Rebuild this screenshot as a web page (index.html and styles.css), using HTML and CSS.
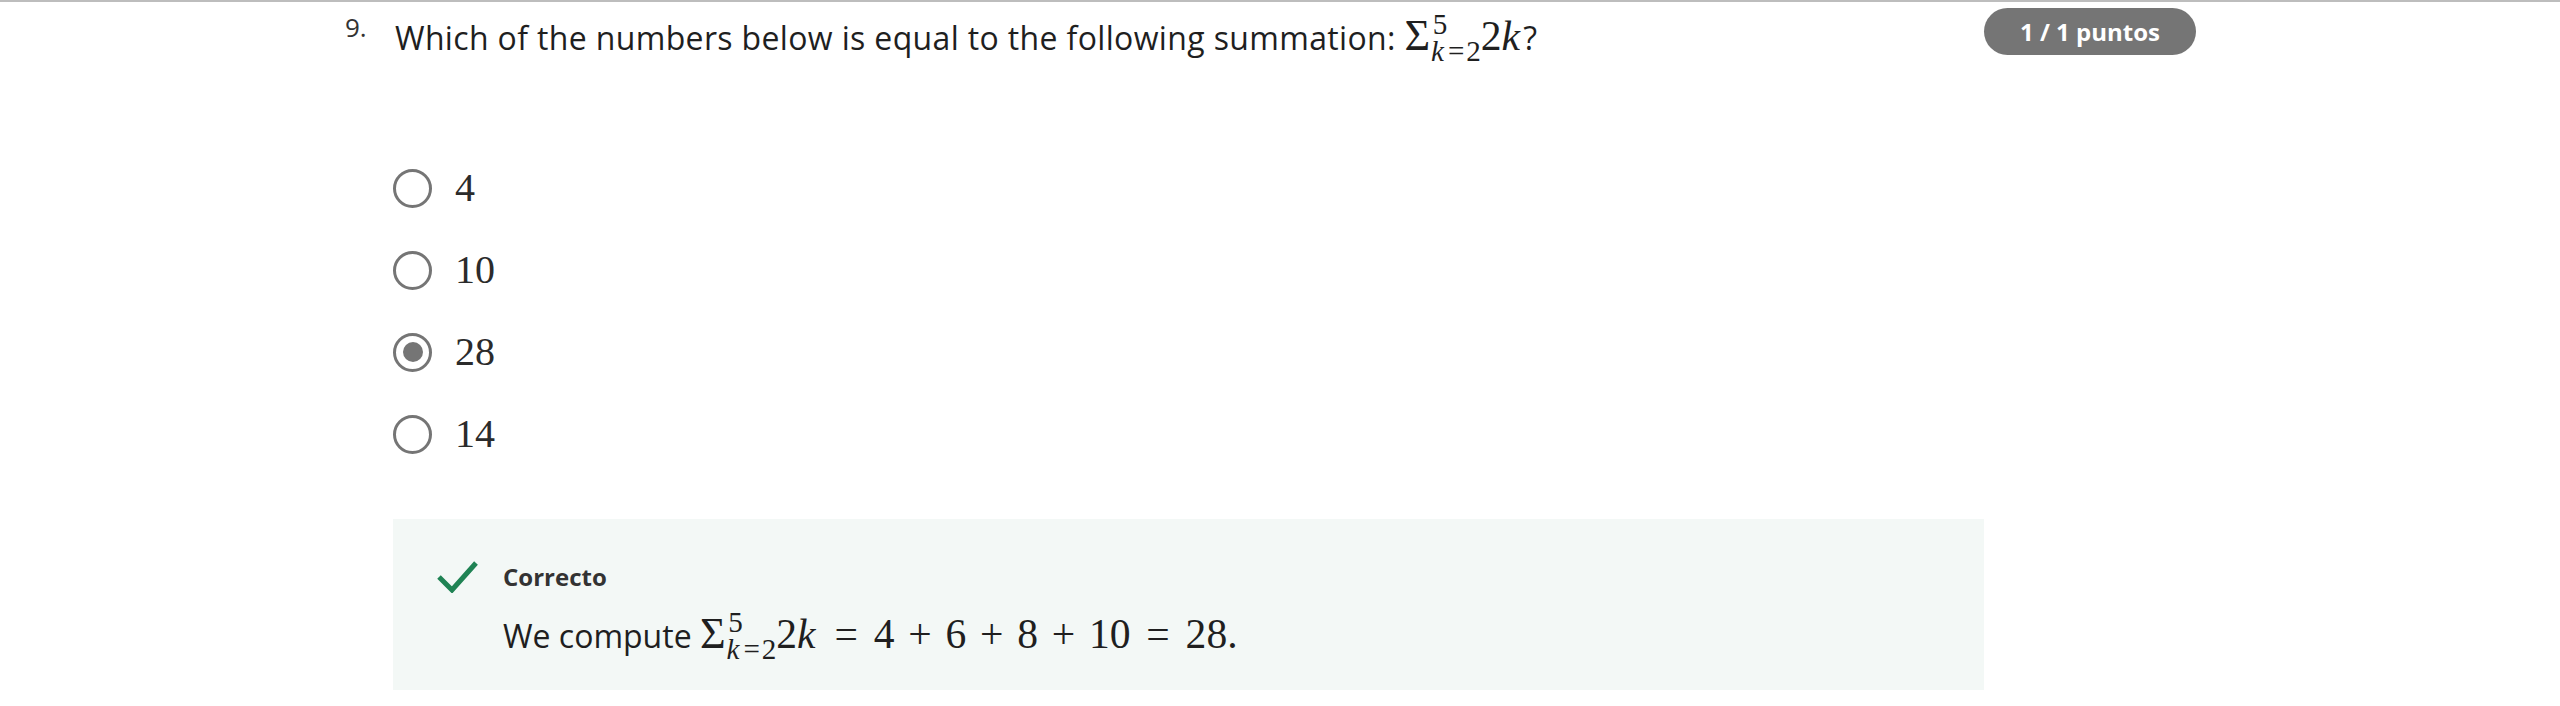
FILE: index.html
```html
<!DOCTYPE html>
<html lang="en">
<head>
<meta charset="utf-8">
<title>Question 9</title>
<link rel="stylesheet" href="styles.css">
</head>
<body>
<div class="topline"></div>
<div class="question">
  <div class="q-header">
    <span class="q-num">9.</span>
    <div class="q-text">Which of the numbers below is equal to the following summation: <span class="math"><span class="sigma">Σ</span><span class="limits"><span class="sup">5</span><span class="sub"><i class="mi">k</i><span class="srel">=</span>2</span></span><span>2</span><i class="mi">k</i></span>?</div>
    <div class="badge-col"><span class="badge">1 / 1 puntos</span></div>
  </div>
  <div class="body">
    <div class="options">
      <label class="option"><span class="radio"></span><span class="opt-text">4</span></label>
      <label class="option"><span class="radio"></span><span class="opt-text">10</span></label>
      <label class="option"><span class="radio checked"></span><span class="opt-text">28</span></label>
      <label class="option"><span class="radio"></span><span class="opt-text">14</span></label>
    </div>
    <div class="feedback">
      <svg class="check" width="41" height="33" viewBox="0 0 41 33"><path d="M2 17 L15 30 L39 3" fill="none" stroke="#1f8354" stroke-width="5"/></svg>
      <div class="fb-title">Correcto</div>
      <div class="fb-text">We compute <span class="math"><span class="sigma">Σ</span><span class="limits"><span class="sup">5</span><span class="sub"><i class="mi">k</i><span class="srel">=</span>2</span></span><span>2</span><i class="mi">k</i><span class="rel">=</span>4<span class="bin">+</span>6<span class="bin">+</span>8<span class="bin">+</span>10<span class="rel">=</span>28.</span></div>
    </div>
  </div>
</div>
</body>
</html>
```

FILE: styles.css
```css
html, body {
  margin: 0;
  padding: 0;
  background: #ffffff;
}
body {
  font-family: "Open Sans", "Liberation Sans", sans-serif;
  color: #1f1f1f;
  width: 2560px;
  height: 706px;
  overflow: hidden;
}
.topline {
  height: 2px;
  background: #bdbdbd;
}
.question {
  padding-left: 345px;
}
.q-header {
  display: grid;
  grid-template-columns: 50px 1589px 212px;
  align-items: start;
  height: 145px;
}
.q-num {
  font-size: 26px;
  line-height: 36px;
  padding-top: 7px;
  color: #333333;
}
.q-text {
  font-size: 32px;
  line-height: 48px;
  padding-top: 9px;
  letter-spacing: 0.35px;
}
.badge-col {
  padding-top: 6px;
}
.badge {
  display: inline-flex;
  align-items: center;
  height: 47px;
  padding: 0 36px;
  border-radius: 24px;
  background: #757575;
  color: #ffffff;
  font-weight: 700;
  font-size: 24px;
  letter-spacing: 0;
}
.math {
  font-family: "Liberation Serif", "DejaVu Serif", serif;
  font-size: 1.3em;
  line-height: 1;
  white-space: nowrap;
  letter-spacing: 0;
}
.mi {
  font-style: italic;
  margin-right: 0.08em;
}
.sigma {
  font-style: normal;
  font-size: 1.06em;
  margin-right: 0.06em;
}
.limits {
  display: inline-flex;
  flex-direction: column;
  font-size: 0.7em;
  line-height: 0.94;
  vertical-align: 0.56em;
}
.sub {
  margin-left: -0.06em;
}
.srel {
  padding: 0 0.06em;
}
.rel {
  padding: 0 0.38em;
}
.bin {
  padding: 0 0.33em;
}
.body {
  margin-left: 48px;
  width: 1591px;
}
.options {
  display: flex;
  flex-direction: column;
}
.option {
  display: flex;
  align-items: center;
  height: 82px;
  gap: 23px;
}
.radio {
  box-sizing: border-box;
  width: 39px;
  height: 39px;
  border: 3px solid #757575;
  border-radius: 50%;
  display: flex;
  align-items: center;
  justify-content: center;
}
.radio.checked::after {
  content: "";
  width: 20px;
  height: 20px;
  border-radius: 50%;
  background: #757575;
}
.opt-text {
  font-family: "Liberation Serif", "DejaVu Serif", serif;
  font-size: 40px;
  line-height: 48px;
  color: #2b2b2b;
}
.feedback {
  margin-top: 44px;
  background: #f3f8f6;
  height: 171px;
  box-sizing: border-box;
  padding: 41px 0 0 44px;
  display: grid;
  grid-template-columns: 41px 1fr;
  column-gap: 25px;
  align-items: center;
  align-content: start;
}
.check {
  display: block;
}
.fb-title {
  font-weight: 700;
  font-size: 24px;
  line-height: 32px;
  color: #333333;
}
.fb-text {
  grid-column: 2;
  font-size: 32px;
  line-height: 48px;
  margin-top: 16px;
}
```
